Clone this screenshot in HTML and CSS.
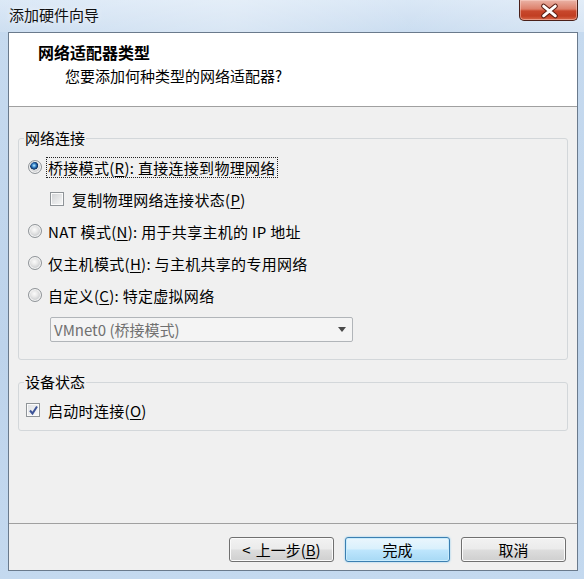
FILE: index.html
```html
<!DOCTYPE html>
<html lang="zh-CN">
<head>
<meta charset="utf-8">
<title>添加硬件向导</title>
<link rel="stylesheet" href="styles.css">
</head>
<body>
<div class="window">
  <div class="titlebar">
    <span class="title">添加硬件向导</span>
    <div class="close">
      <svg width="59" height="21" viewBox="0 0 59 21">
        <path d="M25 6 L37 16 M37 6 L25 16" stroke="#5b1f14" stroke-width="5" stroke-linecap="round" fill="none"/>
        <path d="M25 6 L37 16 M37 6 L25 16" stroke="#ffffff" stroke-width="2.8" stroke-linecap="round" fill="none"/>
      </svg>
    </div>
  </div>
  <div class="client">
    <div class="header">
      <div class="h-title">网络适配器类型</div>
      <div class="h-sub">您要添加何种类型的网络适配器?</div>
    </div>
    <div class="content">
      <fieldset class="group g1">
        <legend>网络连接</legend>
        <div class="row"><span class="radio checked"></span><span class="label focus">桥接模式(<u>R</u>): 直接连接到物理网络</span></div>
        <div class="row indent"><span class="check"></span><span class="label wide">复制物理网络连接状态(<u>P</u>)</span></div>
        <div class="row"><span class="radio"></span><span class="label">NAT 模式(<u>N</u>): 用于共享主机的 IP 地址</span></div>
        <div class="row"><span class="radio"></span><span class="label">仅主机模式(<u>H</u>): 与主机共享的专用网络</span></div>
        <div class="row"><span class="radio"></span><span class="label">自定义(<u>C</u>): 特定虚拟网络</span></div>
        <div class="combo"><span class="combo-text">VMnet0 (桥接模式)</span><span class="arrow"></span></div>
      </fieldset>
      <fieldset class="group g2">
        <legend>设备状态</legend>
        <div class="row"><span class="check checked"><svg width="11" height="11" viewBox="0 0 11 11"><path d="M2 5.5 L4.5 8.5 L9 1.5" stroke="#3d5498" stroke-width="2" fill="none"/></svg></span><span class="label wide">启动时连接(<u>O</u>)</span></div>
      </fieldset>
    </div>
    <div class="footer">
      <button class="btn"><span class="lt">&lt;</span>上一步(<u>B</u>)</button>
      <button class="btn default">完成</button>
      <button class="btn">取消</button>
    </div>
  </div>
</div>
</body>
</html>
```
FILE: styles.css
```css
* { box-sizing: border-box; }
html, body {
  margin: 0;
  width: 584px;
  height: 579px;
  overflow: hidden;
}
body {
  font-family: "Noto Sans CJK SC", "Noto Sans", sans-serif;
  font-size: 15px;
  color: #000;
  background: linear-gradient(180deg, #d6e5f5 0px, #c6daef 30px, #bdd3eb 60%, #c4d9ef 100%);
}
.window {
  display: flex;
  flex-direction: column;
  height: 579px;
}
.titlebar {
  height: 32px;
  display: flex;
  align-items: flex-start;
  padding-left: 9px;
  background: linear-gradient(90deg, rgba(255,255,255,0.15), rgba(255,255,255,0.35) 40%, rgba(255,255,255,0.1) 70%, rgba(255,255,255,0.3));
}
.title {
  line-height: 30px;
  color: #111;
  text-shadow: 0 0 6px rgba(255,255,255,0.9);
}
.close {
  margin-left: auto;
  margin-right: 6px;
  width: 59px;
  height: 21px;
  border: 1px solid #4a2019;
  border-top: none;
  border-radius: 0 0 5px 5px;
  background: linear-gradient(180deg, #eab3a6 0%, #dd806b 45%, #c8472c 55%, #c13e22 80%, #d8684b 100%);
  box-shadow: inset 0 0 0 1px rgba(255,220,210,0.45);
  display: flex;
}
.close svg { margin-left: -1px; }
.client {
  margin: 0 6px 8px 8px;
  flex: 1;
  border: 1px solid #6a7a8c;
  background: #f0f0f0;
  display: flex;
  flex-direction: column;
}
.header {
  height: 74px;
  background: #fff;
  border-bottom: 1px solid #a0a0a0;
  padding: 9px 0 0 29px;
}
.h-title {
  font-weight: bold;
  font-size: 16px;
  line-height: 20px;
}
.h-sub {
  margin: 4px 0 0 27px;
  line-height: 20px;
}
.content {
  flex: 1;
  padding: 0 9px;
}
.group {
  margin: 0;
  border: 1px solid #d3d7da;
  border-radius: 3px;
  min-width: 0;
}
.group legend {
  line-height: 18px;
  padding: 0 1px;
}
.g1 {
  margin-top: 22px;
  padding: 4px 0 17px 9px;
}
.g1 legend { margin-left: -4px; }
.g2 {
  margin-top: 13px;
  padding: 3px 0 4px 7px;
}
.g2 legend { margin-left: -2px; }
.row {
  height: 32px;
  display: flex;
  align-items: center;
}
.row.indent { padding-left: 22px; }
.label {
  margin-left: 4px;
  border: 1px dotted transparent;
  padding: 0 1px;
  line-height: 19px;
  white-space: nowrap;
  letter-spacing: 0.3px;
}
.label.wide { margin-left: 6px; }
.label.focus { border-color: #222; }
u {
  text-decoration: underline;
  text-underline-offset: 2px;
}
.radio {
  width: 14px;
  height: 14px;
  flex: none;
  border-radius: 50%;
  border: 1px solid #8f9498;
  background: radial-gradient(circle at 45% 40%, #fbfbfb 0, #e9e9e9 3px, #cfd1d3 6px);
  box-shadow: inset 0 0 0 1px #f6f6f6;
}
.radio.checked {
  background:
    radial-gradient(circle at 42% 38%, #d6f0ff 0, #6fb9ea 1px, #1f5fa6 2.6px, #0e2f5a 3.8px, rgba(14,47,90,0) 4.3px),
    radial-gradient(circle at 45% 40%, #fbfbfb 0, #e9e9e9 3px, #cfd1d3 6px);
}
.check {
  width: 14px;
  height: 14px;
  flex: none;
  border: 1px solid #8f9498;
  background: linear-gradient(135deg, #cfd1d4 0%, #e6e7e8 55%, #f8f8f8 100%);
  box-shadow: inset 0 0 0 1px #fbfbfb;
  display: flex;
  align-items: center;
  justify-content: center;
}
.check.checked {
  background: linear-gradient(135deg, #dfe1e4 0%, #eeeff0 55%, #fbfbfb 100%);
}
.combo {
  margin: 6px 0 0 22px;
  width: 303px;
  height: 25px;
  border: 1px solid #b1b5b9;
  border-radius: 2px;
  background: #f4f4f4;
  display: flex;
  align-items: center;
  padding-left: 3px;
  color: #707070;
}
.combo-text { line-height: 19px; }
.arrow {
  margin-left: auto;
  margin-right: 6px;
  width: 0;
  height: 0;
  border-left: 4px solid transparent;
  border-right: 4px solid transparent;
  border-top: 5px solid #4a4a4a;
}
.footer {
  border-top: 1px solid #a0a0a0;
  padding: 13px 11px 8px 0;
  display: flex;
  justify-content: flex-end;
  gap: 11px;
}
.btn {
  width: 105px;
  height: 25px;
  padding: 0;
  font: inherit;
  line-height: 21px;
  color: #000;
  border: 1px solid #707070;
  border-radius: 3px;
  background: linear-gradient(180deg, #f2f2f2 0%, #ebebeb 48%, #dddddd 52%, #cfcfcf 100%);
  box-shadow: inset 0 0 0 1px #fbfbfb;
}
.btn .lt { margin-right: 5px; }
.btn.default {
  border-color: #3c7fb1;
  background: linear-gradient(180deg, #eaf6fd 0%, #d9f0fc 48%, #bee6fd 52%, #a7d9f5 100%);
  box-shadow: inset 0 0 0 1px #c9ecfd, 0 0 2px #7cc7f0;
}
```
